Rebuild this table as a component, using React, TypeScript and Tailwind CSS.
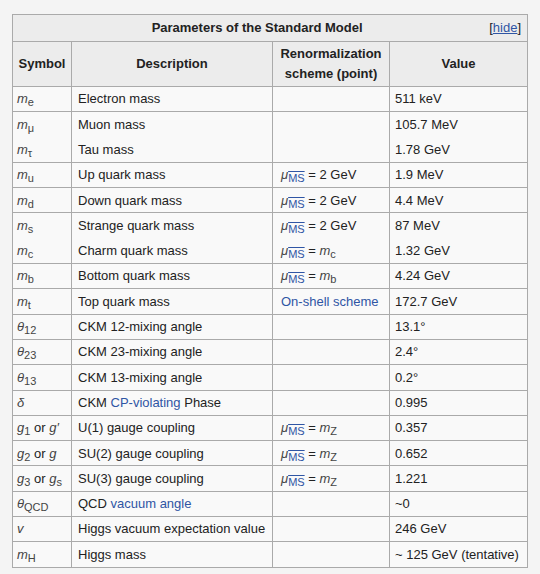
import React from 'react';

type Row = {
  sym: React.ReactNode;
  desc: React.ReactNode;
  scheme?: React.ReactNode;
  value: string;
  joined?: boolean; // no line above this row
};

const Sub = ({ children }: { children: React.ReactNode }) => (
  <sub className="not-italic text-[11px] relative -bottom-[3px] align-baseline">{children}</sub>
);

const Sym = ({ base, sub }: { base: string; sub?: string }) => (
  <span className="italic text-[#444]">
    {base}
    {sub && <Sub>{sub}</Sub>}
  </span>
);

const Link = ({ children }: { children: React.ReactNode }) => (
  <span className="text-[#2f55a4]">{children}</span>
);

// μ with the MS-bar subscript
const MuMS = () => (
  <span>
    <span className="italic text-[#444]">μ</span>
    <Sub>
      <span className="text-[#2f55a4] overline">MS</span>
    </Sub>
  </span>
);

const Scheme = ({ right }: { right: React.ReactNode }) => (
  <span>
    <MuMS /> = {right}
  </span>
);

const rows: Row[] = [
  { sym: <Sym base="m" sub="e" />, desc: 'Electron mass', value: '511 keV' },
  { sym: <Sym base="m" sub="μ" />, desc: 'Muon mass', value: '105.7 MeV' },
  { sym: <Sym base="m" sub="τ" />, desc: 'Tau mass', value: '1.78 GeV', joined: true },
  { sym: <Sym base="m" sub="u" />, desc: 'Up quark mass', scheme: <Scheme right="2 GeV" />, value: '1.9 MeV' },
  { sym: <Sym base="m" sub="d" />, desc: 'Down quark mass', scheme: <Scheme right="2 GeV" />, value: '4.4 MeV' },
  { sym: <Sym base="m" sub="s" />, desc: 'Strange quark mass', scheme: <Scheme right="2 GeV" />, value: '87 MeV' },
  { sym: <Sym base="m" sub="c" />, desc: 'Charm quark mass', scheme: <Scheme right={<Sym base="m" sub="c" />} />, value: '1.32 GeV', joined: true },
  { sym: <Sym base="m" sub="b" />, desc: 'Bottom quark mass', scheme: <Scheme right={<Sym base="m" sub="b" />} />, value: '4.24 GeV' },
  { sym: <Sym base="m" sub="t" />, desc: 'Top quark mass', scheme: <Link>On-shell scheme</Link>, value: '172.7 GeV' },
  { sym: <Sym base="θ" sub="12" />, desc: 'CKM 12-mixing angle', value: '13.1°' },
  { sym: <Sym base="θ" sub="23" />, desc: 'CKM 23-mixing angle', value: '2.4°' },
  { sym: <Sym base="θ" sub="13" />, desc: 'CKM 13-mixing angle', value: '0.2°' },
  { sym: <Sym base="δ" />, desc: <span>CKM <Link>CP-violating</Link> Phase</span>, value: '0.995' },
  {
    sym: <span><Sym base="g" sub="1" /> or <Sym base="g′" /></span>,
    desc: 'U(1) gauge coupling',
    scheme: <Scheme right={<Sym base="m" sub="Z" />} />,
    value: '0.357',
  },
  {
    sym: <span><Sym base="g" sub="2" /> or <Sym base="g" /></span>,
    desc: 'SU(2) gauge coupling',
    scheme: <Scheme right={<Sym base="m" sub="Z" />} />,
    value: '0.652',
  },
  {
    sym: <span><Sym base="g" sub="3" /> or <Sym base="g" sub="s" /></span>,
    desc: 'SU(3) gauge coupling',
    scheme: <Scheme right={<Sym base="m" sub="Z" />} />,
    value: '1.221',
  },
  { sym: <Sym base="θ" sub="QCD" />, desc: <span>QCD <Link>vacuum angle</Link></span>, value: '~0' },
  { sym: <Sym base="v" />, desc: 'Higgs vacuum expectation value', value: '246 GeV' },
  { sym: <Sym base="m" sub="H" />, desc: 'Higgs mass', value: '~ 125 GeV (tentative)' },
];

export default function App() {
  return (
    <div
      className="min-h-[574px] bg-[#f4f4f4] pt-[14px] pl-[12px] text-[13px] text-[#222]"
      style={{ fontFamily: '"Liberation Sans", Arial, sans-serif' }}
    >
      <table className="w-[515px] border-collapse border border-[#aaa] bg-[#f9f9f9] table-fixed">
        <colgroup>
          <col className="w-[59px]" />
          <col className="w-[201px]" />
          <col className="w-[117px]" />
          <col className="w-[138px]" />
        </colgroup>
        <thead>
          <tr className="h-[27px]">
            <th colSpan={4} className="border border-[#aaa] bg-[#ececec] px-[6px] font-bold">
              <div className="flex items-center">
                <span className="flex-1 text-center pl-[6px]">Parameters of the Standard Model</span>
                <span className="font-normal">
                  [<span className="text-[#2f55a4] underline">hide</span>]
                </span>
              </div>
            </th>
          </tr>
          <tr className="h-[45px]">
            <th className="border border-[#aaa] bg-[#ececec] font-bold">Symbol</th>
            <th className="border border-[#aaa] bg-[#ececec] font-bold">Description</th>
            <th className="border border-[#aaa] bg-[#ececec] font-bold leading-[20px]">
              Renormalization
              <br />
              scheme (point)
            </th>
            <th className="border border-[#aaa] bg-[#ececec] font-bold">Value</th>
          </tr>
        </thead>
        <tbody>
          {rows.map((r, i) => {
            const nextJoined = rows[i + 1]?.joined;
            const cell = r.joined
              ? 'border-x border-b border-[#aaa] border-t-0'
              : nextJoined
                ? 'border-x border-t border-[#aaa] border-b-0'
                : 'border border-[#aaa]';
            return (
              <tr key={i} className="h-[25.3px]">
                <td className={`${cell} pl-[4px] whitespace-nowrap`}>{r.sym}</td>
                <td className={`${cell} pl-[6px] whitespace-nowrap`}>{r.desc}</td>
                <td className={`${cell} pl-[8px] whitespace-nowrap`}>{r.scheme}</td>
                <td className={`${cell} pl-[5px] whitespace-nowrap`}>{r.value}</td>
              </tr>
            );
          })}
        </tbody>
      </table>
    </div>
  );
}
